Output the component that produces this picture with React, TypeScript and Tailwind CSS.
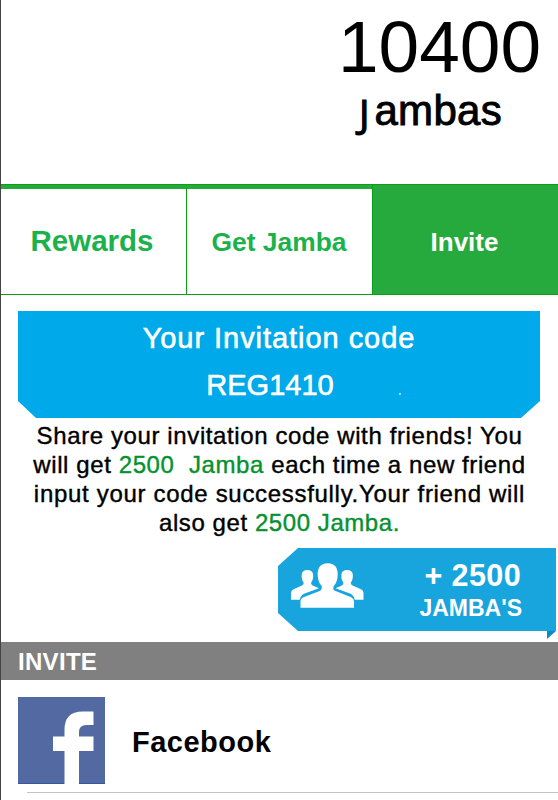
const helvetica = 'font-["Liberation_Sans",Arial,sans-serif]';

function Balance() {
  return (
    <header className="flex h-[184px] flex-col items-end pt-[10px]">
      <div className="pr-[17px] text-[73px] leading-[74px]">10400</div>
      <div className="mt-[2px] flex pr-[56px] text-[42px] leading-[50px] tracking-[0.3px] [-webkit-text-stroke:0.9px_black]">
        <span className='relative top-[2px] mr-[5px] font-["Open_Sans",sans-serif] text-[39px] tracking-normal [-webkit-text-stroke:1.2px_black]'>J</span>
        <span>ambas</span>
      </div>
    </header>
  );
}

function Tabs() {
  return (
    <nav className="flex h-[111px] border-t border-b border-[#0b9f14] text-center font-bold text-[#1bb14b]">
      <button className="w-[186px] border-t-4 border-r border-t-[#26a93d] border-r-[#0b9f14] pr-[3px] text-[29.5px]">Rewards</button>
      <button className="w-[185px] border-t-4 border-t-[#26a93d] pt-[2px] pr-px text-[26.4px]">Get Jamba</button>
      <button className="flex-1 border-l border-[#0b9f14] bg-[#26a93d] pt-[6px] pr-[2px] text-[26px] text-white">Invite</button>
    </nav>
  );
}

function InviteCode() {
  return (
    <section className="relative mt-[16px] ml-[17px] h-[107px] w-[522px] bg-[#00a9e9] pt-[4px] text-center text-[29px] leading-[47px] text-white [-webkit-text-stroke:0.6px_white] [clip-path:polygon(0_0,100%_0,100%_90px,503px_100%,18px_100%,0_90px)]">
      <div className="tracking-[0.95px]">Your Invitation code</div>
      <div className="pr-[18px]">REG1410</div>
      <i className="absolute top-[82px] left-[381px] h-[2px] w-[2px] bg-white/60" />
    </section>
  );
}

function Description() {
  return (
    <div className="mt-[3px] flex h-[118px] flex-col items-center text-[24px] leading-[29px] whitespace-pre [-webkit-text-stroke:0.4px]">
      <p className="tracking-[0.61px]">Share your invitation code with friends! You</p>
      <p className="tracking-[0.59px]">
        will get <span className="text-[#06912f]">2500  Jamba</span> each time a new friend
      </p>
      <p className="tracking-[0.69px]">input your code successfully.Your friend will</p>
      <p className="tracking-[0.57px]">
        also get <span className="text-[#06912f]">2500 Jamba.</span>
      </p>
    </div>
  );
}

function PeopleIcon() {
  return (
    <svg className="mt-[14px] ml-[12px] h-[47px] w-[75px]" viewBox="0 0 75 47" fill="white">
      <path d="M1 37.700V31q0-2.500 2.500-3.700L12 23.500q2-.8 1.700-3C12 18.500 11.500 16 11.700 12.500 12 9.500 14 8 17.400 8s5.400 1.500 5.700 4.500c.2 3.500-.3 6-2 8q-.3 2.200 1.500 3l6.400 2.800-14.500 5.200q-4 1.700-4.700 6.200z" />
      <path d="M73.500 37.700V31q0-2.500-2.500-3.700l-8.500-3.800q-2-.8-1.700-3c1.700-2 2.200-4.500 2-8C62.500 9.500 60.500 8 57.100 8s-5.400 1.500-5.700 4.500c-.2 3.500.3 6 2 8q.3 2.200-1.500 3l-6.400 2.800L60 31.500q4 1.700 4.700 6.200z" />
      <path d="M10.500 45.700v-6.200q0-3 3-4.200l15.500-6q3.500-1.300 2.700-5.300c-2.500-2.500-3.700-6-4-10.500C27.200 5.500 31 1.300 37.700 1.300S48.200 5.500 47.700 13.500c-.3 4.500-1.500 8-4 10.500-.8 4-.5 4 2.500 5.300l15 6q2.800 1.200 2.800 4.200v6.200z" />
    </svg>
  );
}

function Bonus() {
  return (
    <div className="relative mr-[2px] flex h-[83px] w-[278px] self-end text-right font-bold text-white">
      <div className="flex h-full w-full justify-between bg-[#18a5dd] [clip-path:polygon(20px_0,100%_0,100%_100%,20px_100%,0_65px,0_18px)]">
        <PeopleIcon />
        <div className="pt-[9px] pr-[34px]">
          <div className="pr-px text-[30.5px] leading-[36px] tracking-[0.4px]">+ 2500</div>
          <div className="text-[23px] leading-[31px]">JAMBA&apos;S</div>
        </div>
      </div>
      <div className="absolute top-full right-0 h-[8px] w-[9px] bg-[#1489bd] [clip-path:polygon(0_0,100%_0,0_100%)]" />
    </div>
  );
}

function FacebookRow() {
  return (
    <div className="flex h-[112px] pt-[17px] pl-[17px]">
      <svg className="h-[87px] w-[87px]" viewBox="0 0 87 87">
        <rect width="87" height="87" fill="#5269a2" />
        <path d="M0 86.500H87" stroke="#3555a0" />
        <path d="M46.500 87V54H35V39.500h11.500V33q0-18.500 18-18.500h11V28h-7q-7.500 0-7.500 7v4.500h14.500V54H61v33z" fill="white" />
      </svg>
      <div className="ml-[27px] pt-[25px] text-[29px] leading-[40px] font-bold tracking-[0.5px]">Facebook</div>
    </div>
  );
}

export default function App() {
  return (
    <div className={`flex h-[800px] w-[558px] flex-col overflow-hidden border-l border-[#444] bg-white text-black ${helvetica}`}>
      <Balance />
      <Tabs />
      <InviteCode />
      <Description />
      <div className="mt-[9px] flex flex-col">
        <Bonus />
      </div>
      <h2 className="mt-[11px] h-[38px] bg-[#808080] pl-[17px] text-[24px] leading-[40px] font-bold tracking-[0.3px] text-white">INVITE</h2>
      <FacebookRow />
      <div className="ml-[26px] h-px shrink-0 bg-[#c4c4c4]" />
    </div>
  );
}
